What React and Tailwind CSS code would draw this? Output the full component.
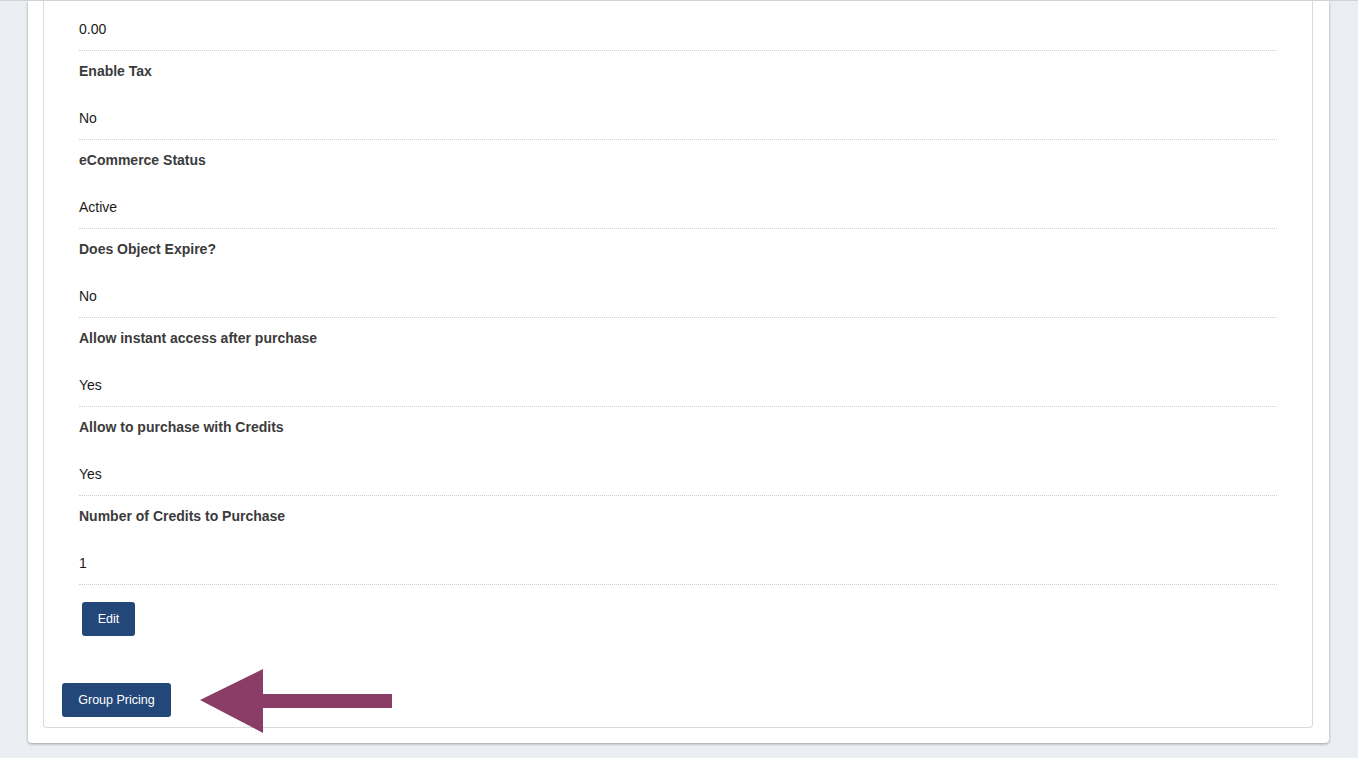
import React from "react";

const rows = [
  ["Enable Tax", "No"],
  ["eCommerce Status", "Active"],
  ["Does Object Expire?", "No"],
  ["Allow instant access after purchase", "Yes"],
  ["Allow to purchase with Credits", "Yes"],
  ["Number of Credits to Purchase", "1"],
];

export default function App() {
  return (
    <div
      className="relative h-[758px] w-[1358px] overflow-hidden bg-[#ebeef2] border-t border-[#cfd2d6]"
      style={{ fontFamily: '"Liberation Sans", Arial, sans-serif' }}
    >
      <div className="ml-[28px] w-[1301px] bg-white rounded-b-[4px] shadow-[0_1px_3px_rgba(0,0,0,0.35)] pb-[15px]">
        <div className="ml-[15px] w-[1270px] border-x border-b border-[#dadada] rounded-b-[4px] px-[18px] pb-[10px]">
          <div className="px-[17px]">
            <div className="pt-[19px] pb-[12px] border-b border-dotted border-[#cfcfcf] text-[14px] leading-[18px] text-[#1a1a1a]">
              0.00
            </div>
            {rows.map(([label, value]) => (
              <div
                key={label}
                className="pt-[11px] pb-[12px] border-b border-dotted border-[#cfcfcf] text-[14px] leading-[18px]"
              >
                <div className="font-bold text-[#3b3b3b]">{label}</div>
                <div className="mt-[29px] text-[#1a1a1a]">{value}</div>
              </div>
            ))}
            <div className="pt-[17px]">
              <button className="ml-[3px] w-[53px] h-[34px] rounded-[3px] bg-[#24477a] text-white text-[12.5px] flex items-center justify-center">
                Edit
              </button>
            </div>
          </div>
          <div className="mt-[47px]">
            <button className="w-[109px] h-[34px] rounded-[3px] bg-[#24477a] text-white text-[12.5px] flex items-center justify-center">
              Group Pricing
            </button>
          </div>
        </div>
      </div>
      <svg
        className="absolute left-[200px] top-[667px]"
        width="193"
        height="66"
        viewBox="0 0 193 66"
      >
        <polygon
          points="0,32 63,1 63,26 192,26 192,40 63,40 63,65"
          fill="#8a3d67"
        />
      </svg>
    </div>
  );
}
